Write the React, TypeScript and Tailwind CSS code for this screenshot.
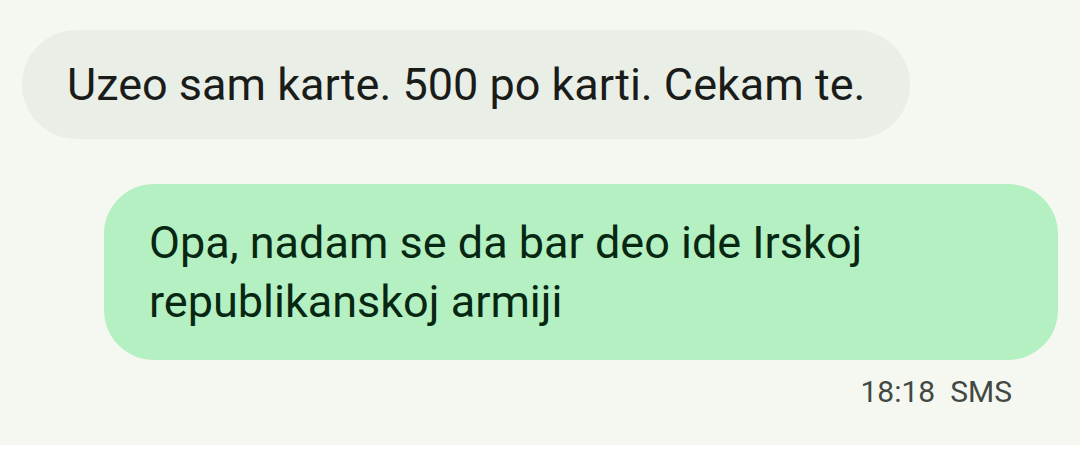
export default function App() {
  return (
    <div className="w-[1080px] h-[453px] bg-white font-['Roboto',sans-serif]">
      <div className="h-[445px] bg-[#f4f8f1] flex flex-col px-[22px] pt-[30px]">
        <div className="self-start h-[109px] rounded-full bg-[#e9eee7] px-[45px] flex items-center">
          <span className="text-[45px] leading-[59px] text-[#1a1c19] whitespace-nowrap">
            Uzeo sam karte. 500 po karti. Cekam te.
          </span>
        </div>

        <div className="self-end mt-[45px] w-[954px] rounded-[50px] bg-[#b4f0c1] px-[45px] py-[29px]">
          <p className="text-[45px] leading-[59px] text-[#072712]">
            Opa, nadam se da bar deo ide Irskoj republikanskoj armiji
          </p>
        </div>

        <div className="self-end mt-[12px] mr-[46px] flex gap-[15px] text-[30px] leading-[40px] text-[#434842]">
          <span>18:18</span>
          <span>SMS</span>
        </div>
      </div>
    </div>
  );
}
